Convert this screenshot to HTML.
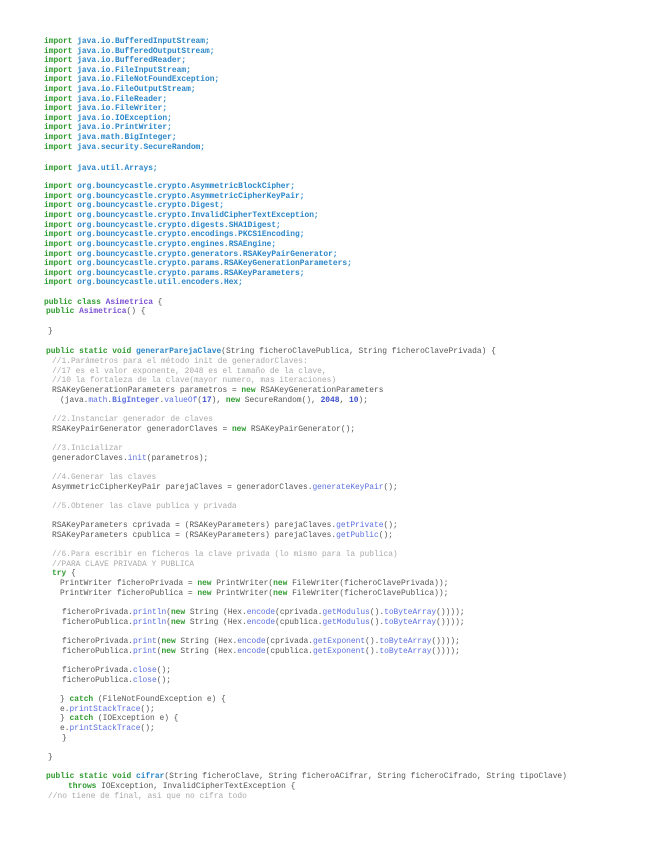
<!DOCTYPE html>
<html><head><meta charset="utf-8"><style>
html,body{margin:0;padding:0;background:#fff;width:655px;height:848px;overflow:hidden}
.l{position:absolute;white-space:pre;font-family:"Liberation Mono",monospace;font-size:7.9px;line-height:10px;color:#555;}
.k{color:#2e9a2e;font-weight:bold}
.p{color:#2a86c8;font-weight:bold}
.a{color:#7a4fd0;font-weight:bold}
.m{color:#5a6fe0}
.c{color:#aaa}
.n{color:#3b4fd0;font-weight:bold}
</style></head><body>
<div class="l" style="top:37px;left:44px"><span class="k">import</span> <span class="p">java.io.BufferedInputStream;</span></div>
<div class="l" style="top:47px;left:44px"><span class="k">import</span> <span class="p">java.io.BufferedOutputStream;</span></div>
<div class="l" style="top:56px;left:44px"><span class="k">import</span> <span class="p">java.io.BufferedReader;</span></div>
<div class="l" style="top:66px;left:44px"><span class="k">import</span> <span class="p">java.io.FileInputStream;</span></div>
<div class="l" style="top:75px;left:44px"><span class="k">import</span> <span class="p">java.io.FileNotFoundException;</span></div>
<div class="l" style="top:85px;left:44px"><span class="k">import</span> <span class="p">java.io.FileOutputStream;</span></div>
<div class="l" style="top:95px;left:44px"><span class="k">import</span> <span class="p">java.io.FileReader;</span></div>
<div class="l" style="top:104px;left:44px"><span class="k">import</span> <span class="p">java.io.FileWriter;</span></div>
<div class="l" style="top:114px;left:44px"><span class="k">import</span> <span class="p">java.io.IOException;</span></div>
<div class="l" style="top:123px;left:44px"><span class="k">import</span> <span class="p">java.io.PrintWriter;</span></div>
<div class="l" style="top:133px;left:44px"><span class="k">import</span> <span class="p">java.math.BigInteger;</span></div>
<div class="l" style="top:143px;left:44px"><span class="k">import</span> <span class="p">java.security.SecureRandom;</span></div>
<div class="l" style="top:164px;left:44px"><span class="k">import</span> <span class="p">java.util.Arrays;</span></div>
<div class="l" style="top:182px;left:44px"><span class="k">import</span> <span class="p">org.bouncycastle.crypto.AsymmetricBlockCipher;</span></div>
<div class="l" style="top:192px;left:44px"><span class="k">import</span> <span class="p">org.bouncycastle.crypto.AsymmetricCipherKeyPair;</span></div>
<div class="l" style="top:201px;left:44px"><span class="k">import</span> <span class="p">org.bouncycastle.crypto.Digest;</span></div>
<div class="l" style="top:211px;left:44px"><span class="k">import</span> <span class="p">org.bouncycastle.crypto.InvalidCipherTextException;</span></div>
<div class="l" style="top:221px;left:44px"><span class="k">import</span> <span class="p">org.bouncycastle.crypto.digests.SHA1Digest;</span></div>
<div class="l" style="top:230px;left:44px"><span class="k">import</span> <span class="p">org.bouncycastle.crypto.encodings.PKCS1Encoding;</span></div>
<div class="l" style="top:240px;left:44px"><span class="k">import</span> <span class="p">org.bouncycastle.crypto.engines.RSAEngine;</span></div>
<div class="l" style="top:250px;left:44px"><span class="k">import</span> <span class="p">org.bouncycastle.crypto.generators.RSAKeyPairGenerator;</span></div>
<div class="l" style="top:259px;left:44px"><span class="k">import</span> <span class="p">org.bouncycastle.crypto.params.RSAKeyGenerationParameters;</span></div>
<div class="l" style="top:269px;left:44px"><span class="k">import</span> <span class="p">org.bouncycastle.crypto.params.RSAKeyParameters;</span></div>
<div class="l" style="top:278px;left:44px"><span class="k">import</span> <span class="p">org.bouncycastle.util.encoders.Hex;</span></div>
<div class="l" style="top:298px;left:44px"><span class="k">public class</span> <span class="a">Asimetrica</span> {</div>
<div class="l" style="top:307px;left:46px"><span class="k">public</span> <span class="a">Asimetrica</span>() {</div>
<div class="l" style="top:327px;left:48px">}</div>
<div class="l" style="top:347px;left:46px"><span class="k">public static void</span> <span class="p">generarParejaClave</span>(String ficheroClavePublica, String ficheroClavePrivada) {</div>
<div class="l c" style="top:357px;left:52px">//1.Parámetros para el método init de generadorClaves:</div>
<div class="l c" style="top:367px;left:52px">//17 es el valor exponente, 2048 es el tamaño de la clave,</div>
<div class="l c" style="top:376px;left:52px">//10 la fortaleza de la clave(mayor numero, mas iteraciones)</div>
<div class="l" style="top:386px;left:52px">RSAKeyGenerationParameters parametros = <span class="k">new</span> RSAKeyGenerationParameters</div>
<div class="l" style="top:396px;left:60px">(java.<span class="m">math</span>.<span class="p" style="color:#5a6fe0">BigInteger</span>.<span class="m">valueOf</span>(<span class="n">17</span>), <span class="k">new</span> SecureRandom(), <span class="n">2048</span>, <span class="n">10</span>);</div>
<div class="l c" style="top:415px;left:52px">//2.Instanciar generador de claves</div>
<div class="l" style="top:425px;left:52px">RSAKeyPairGenerator generadorClaves = <span class="k">new</span> RSAKeyPairGenerator();</div>
<div class="l c" style="top:444px;left:52px">//3.Inicializar</div>
<div class="l" style="top:454px;left:52px">generadorClaves.<span class="m">init</span>(parametros);</div>
<div class="l c" style="top:473px;left:52px">//4.Generar las claves</div>
<div class="l" style="top:483px;left:52px">AsymmetricCipherKeyPair parejaClaves = generadorClaves.<span class="m">generateKeyPair</span>();</div>
<div class="l c" style="top:502px;left:52px">//5.Obtener las clave publica y privada</div>
<div class="l" style="top:521px;left:52px">RSAKeyParameters cprivada = (RSAKeyParameters) parejaClaves.<span class="m">getPrivate</span>();</div>
<div class="l" style="top:531px;left:52px">RSAKeyParameters cpublica = (RSAKeyParameters) parejaClaves.<span class="m">getPublic</span>();</div>
<div class="l c" style="top:550px;left:52px">//6.Para escribir en ficheros la clave privada (lo mismo para la publica)</div>
<div class="l c" style="top:560px;left:52px">//PARA CLAVE PRIVADA Y PUBLICA</div>
<div class="l" style="top:569px;left:52px"><span class="k">try</span> {</div>
<div class="l" style="top:579px;left:60px">PrintWriter ficheroPrivada = <span class="k">new</span> PrintWriter(<span class="k">new</span> FileWriter(ficheroClavePrivada));</div>
<div class="l" style="top:589px;left:60px">PrintWriter ficheroPublica = <span class="k">new</span> PrintWriter(<span class="k">new</span> FileWriter(ficheroClavePublica));</div>
<div class="l" style="top:608px;left:62px">ficheroPrivada.<span class="m">println</span>(<span class="k">new</span> String (Hex.<span class="m">encode</span>(cprivada.<span class="m">getModulus</span>().<span class="m">toByteArray</span>())));</div>
<div class="l" style="top:618px;left:62px">ficheroPublica.<span class="m">println</span>(<span class="k">new</span> String (Hex.<span class="m">encode</span>(cpublica.<span class="m">getModulus</span>().<span class="m">toByteArray</span>())));</div>
<div class="l" style="top:637px;left:62px">ficheroPrivada.<span class="m">print</span>(<span class="k">new</span> String (Hex.<span class="m">encode</span>(cprivada.<span class="m">getExponent</span>().<span class="m">toByteArray</span>())));</div>
<div class="l" style="top:647px;left:62px">ficheroPublica.<span class="m">print</span>(<span class="k">new</span> String (Hex.<span class="m">encode</span>(cpublica.<span class="m">getExponent</span>().<span class="m">toByteArray</span>())));</div>
<div class="l" style="top:666px;left:62px">ficheroPrivada.<span class="m">close</span>();</div>
<div class="l" style="top:676px;left:62px">ficheroPublica.<span class="m">close</span>();</div>
<div class="l" style="top:695px;left:60px">} <span class="k">catch</span> (FileNotFoundException e) {</div>
<div class="l" style="top:705px;left:60px">e.<span class="m">printStackTrace</span>();</div>
<div class="l" style="top:714px;left:60px">} <span class="k">catch</span> (IOException e) {</div>
<div class="l" style="top:724px;left:60px">e.<span class="m">printStackTrace</span>();</div>
<div class="l" style="top:734px;left:62px">}</div>
<div class="l" style="top:753px;left:48px">}</div>
<div class="l" style="top:772px;left:46px"><span class="k">public static void</span> <span class="p">cifrar</span>(String ficheroClave, String ficheroACifrar, String ficheroCifrado, String tipoClave)</div>
<div class="l" style="top:782px;left:68px"><span class="k">throws</span> IOException, InvalidCipherTextException {</div>
<div class="l c" style="top:792px;left:48px">//no tiene de final, asi que no cifra todo</div>
</body></html>
